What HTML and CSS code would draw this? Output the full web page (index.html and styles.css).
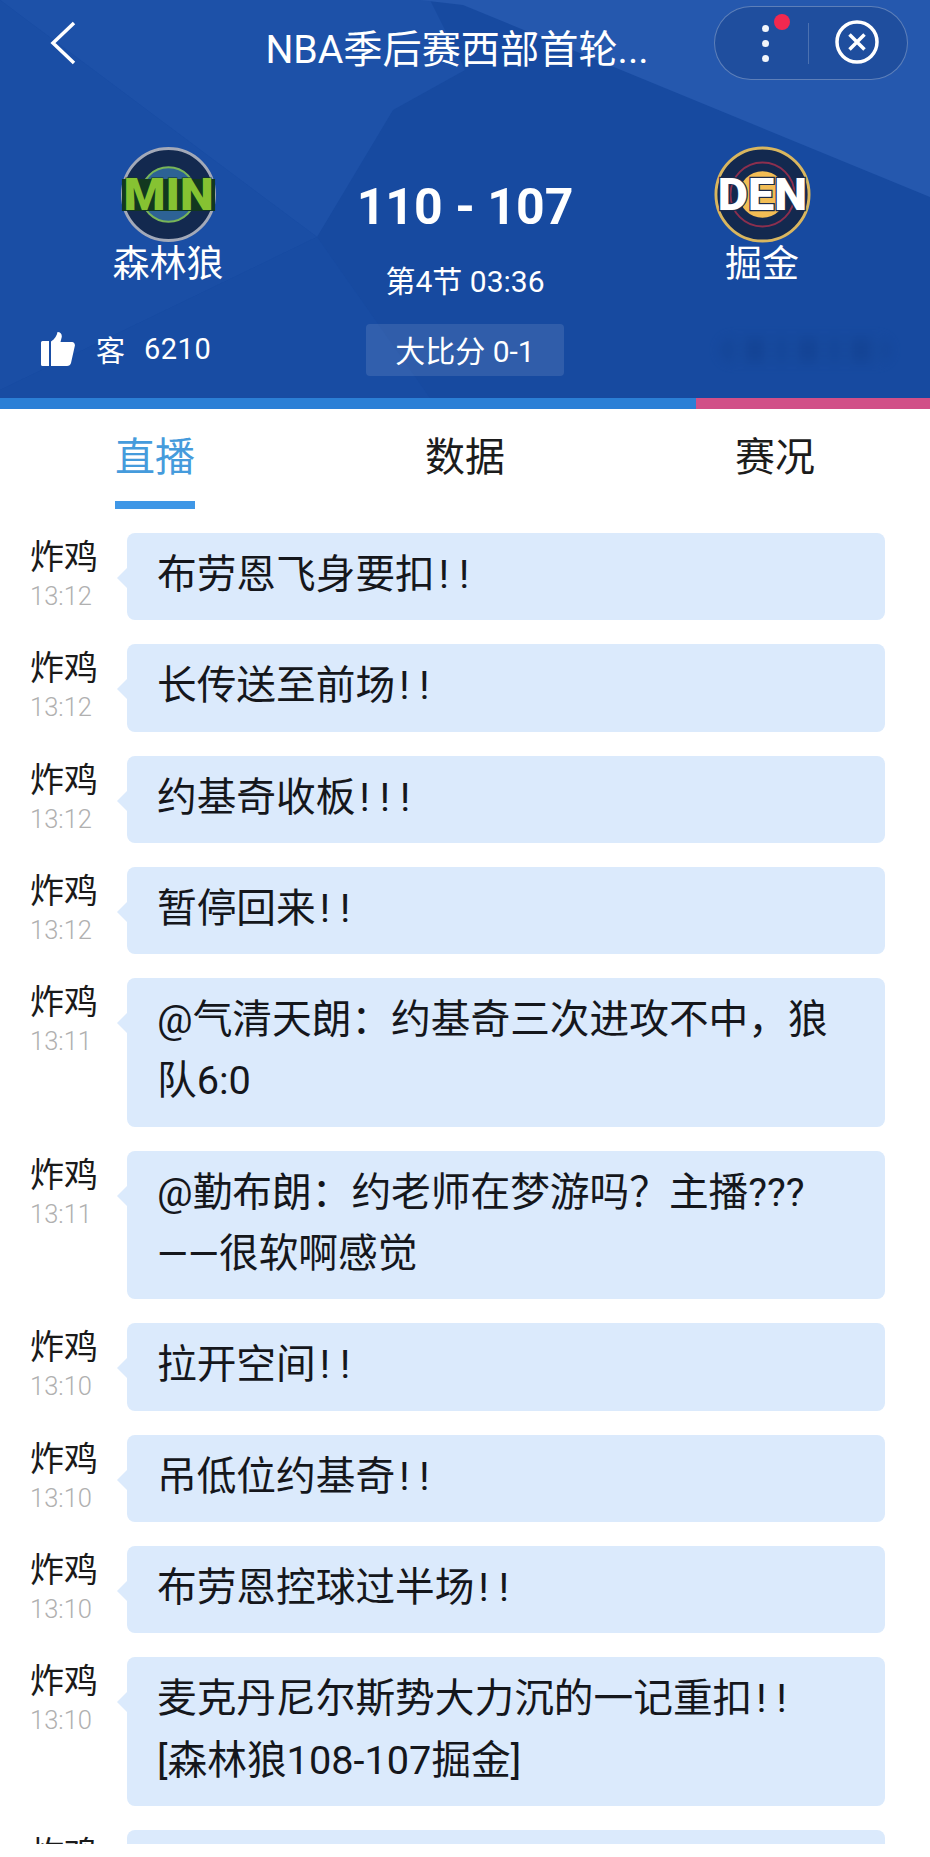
FILE: index.html
```html
<!DOCTYPE html>
<html lang="zh-CN">
<head>
<meta charset="utf-8">
<title>NBA季后赛西部首轮</title>
<link rel="stylesheet" href="styles.css">
</head>
<body>
<div class="page">
  <header class="hero">
    <svg class="hero-bg" viewBox="0 0 930 398" preserveAspectRatio="none" aria-hidden="true">
      <rect width="930" height="398" fill="#174aa0"/>
      <polygon points="0,0 430,0 465,70 393,110 317,237" fill="#1d51a8"/>
      <polygon points="0,0 317,237 0,390" fill="#1a4ea5"/>
      <polygon points="420,0 463,5 930,197 930,0" fill="#2558ae"/>
      <polygon points="0,390 317,237 430,398 0,398" fill="#184ca3"/>
    </svg>

    <div class="topbar">
      <svg class="back" viewBox="0 0 26 44" aria-hidden="true"><path d="M24 2 L3 22 L24 42"/></svg>
      <h1 class="title">NBA季后赛西部首轮...</h1>
      <div class="capsule">
        <div class="capsule-more">
          <span class="dot"></span><span class="dot"></span><span class="dot"></span>
          <span class="badge"></span>
        </div>
        <span class="capsule-sep"></span>
        <svg class="close" viewBox="0 0 44 44" aria-hidden="true">
          <circle cx="22" cy="22" r="20"/>
          <path d="M14.500 14.500 L29.500 29.500 M29.500 14.500 L14.500 29.500"/>
        </svg>
      </div>
    </div>

    <div class="match">
      <div class="team">
        <svg class="logo" viewBox="0 0 100 100" role="img" aria-label="MIN">
          <circle cx="50" cy="50" r="47.500" fill="#13294f" stroke="#a3a9b8" stroke-width="3"/>
          <circle cx="50" cy="50" r="28" fill="#2d6295" stroke="#78b558" stroke-width="2"/>
          <rect x="2" y="34" width="96" height="33" fill="#12381f"/>
          <text class="logo-text logo-min" x="50" y="66" textLength="93" lengthAdjust="spacingAndGlyphs">MIN</text>
        </svg>
        <div class="team-name">森林狼</div>
      </div>
      <div class="score-box">
        <div class="score">110 - 107</div>
        <div class="period">第4节 03:36</div>
      </div>
      <div class="team">
        <svg class="logo" viewBox="0 0 100 100" role="img" aria-label="DEN">
          <circle cx="50" cy="50" r="48" fill="#13294f" stroke="#d9b65f" stroke-width="3"/>
          <circle cx="50" cy="50" r="33" fill="none" stroke="#8c2f4e" stroke-width="2"/>
          <circle cx="50" cy="50" r="24" fill="#f2bd55"/>
          <text class="logo-text logo-den" x="50" y="66" textLength="92" lengthAdjust="spacingAndGlyphs">DEN</text>
        </svg>
        <div class="team-name">掘金</div>
      </div>
    </div>

    <div class="hero-foot">
      <div class="likes">
        <svg class="thumb" viewBox="0 0 34 34" aria-hidden="true">
          <path d="M0 10.500 a1.500 1.500 0 0 1 1.500 -1.500 H8 V34 H1.500 A1.500 1.500 0 0 1 0 32.500 Z"/>
          <path d="M10 9.500 C14 7 16 3 16.500 0 C20 0 21.500 3 20.500 6 L19.500 10 H31 C33 10 34.300 12 33.800 14 L30 31 C29.500 33 28 34 26 34 H10 Z"/>
        </svg>
        <span class="likes-side">客</span>
        <span class="likes-count">6210</span>
      </div>
      <div class="series">大比分 0-1</div>
      <div class="smudge-slot"><span class="smudge"></span></div>
    </div>
  </header>

  <div class="progress"><span class="progress-away"></span><span class="progress-home"></span></div>

  <nav class="tabs">
    <a class="tab tab-active">直播</a>
    <a class="tab">数据</a>
    <a class="tab">赛况</a>
  </nav>

  <section class="feed">
    <article class="msg">
      <div class="who"><div class="who-name">炸鸡</div><div class="who-time">13:12</div></div>
      <div class="bubble">布劳恩飞身要扣<span class="bang">!!</span></div>
    </article>
    <article class="msg">
      <div class="who"><div class="who-name">炸鸡</div><div class="who-time">13:12</div></div>
      <div class="bubble">长传送至前场<span class="bang">!!</span></div>
    </article>
    <article class="msg">
      <div class="who"><div class="who-name">炸鸡</div><div class="who-time">13:12</div></div>
      <div class="bubble">约基奇收板<span class="bang">!!!</span></div>
    </article>
    <article class="msg">
      <div class="who"><div class="who-name">炸鸡</div><div class="who-time">13:12</div></div>
      <div class="bubble">暂停回来<span class="bang">!!</span></div>
    </article>
    <article class="msg">
      <div class="who"><div class="who-name">炸鸡</div><div class="who-time">13:11</div></div>
      <div class="bubble">@气清天朗：约基奇三次进攻不中，狼队6:0</div>
    </article>
    <article class="msg">
      <div class="who"><div class="who-name">炸鸡</div><div class="who-time">13:11</div></div>
      <div class="bubble">@勤布朗：约老师在梦游吗？主播???<br>——很软啊感觉</div>
    </article>
    <article class="msg">
      <div class="who"><div class="who-name">炸鸡</div><div class="who-time">13:10</div></div>
      <div class="bubble">拉开空间<span class="bang">!!</span></div>
    </article>
    <article class="msg">
      <div class="who"><div class="who-name">炸鸡</div><div class="who-time">13:10</div></div>
      <div class="bubble">吊低位约基奇<span class="bang">!!</span></div>
    </article>
    <article class="msg">
      <div class="who"><div class="who-name">炸鸡</div><div class="who-time">13:10</div></div>
      <div class="bubble">布劳恩控球过半场<span class="bang">!!</span></div>
    </article>
    <article class="msg">
      <div class="who"><div class="who-name">炸鸡</div><div class="who-time">13:10</div></div>
      <div class="bubble">麦克丹尼尔斯势大力沉的一记重扣<span class="bang">!!</span><br>[森林狼108-107掘金]</div>
    </article>
    <article class="msg">
      <div class="who"><div class="who-name">炸鸡</div></div>
      <div class="bubble">&nbsp;</div>
    </article>
  </section>
</div>
</body>
</html>
```

FILE: styles.css
```css
* { box-sizing: border-box; }

html, body {
  margin: 0;
  background: #fff;
}

body {
  font-family: Roboto, "Noto Sans CJK SC", sans-serif;
  color: #111;
}

.page {
  width: 930px;
  height: 1857px;
  overflow: hidden;
  display: flex;
  flex-direction: column;
}

/* Match header */
.hero {
  position: relative;
  height: 398px;
  flex: none;
  color: #fff;
  display: flex;
  flex-direction: column;
}

.hero-bg {
  position: absolute;
  inset: 0;
  width: 100%;
  height: 100%;
}

.topbar, .match, .hero-foot {
  position: relative;
}

.topbar {
  height: 86px;
  flex: none;
  display: grid;
  grid-template-columns: 240px 1fr 240px;
  grid-template-rows: 86px;
  align-items: center;
}

.back {
  width: 26px;
  height: 44px;
  margin-left: 50px;
  fill: none;
  stroke: #fff;
  stroke-width: 3.500;
}

.title {
  margin: 0;
  align-self: start;
  height: 86px;
  padding: 7px 16px 0 0;
  text-align: center;
  font-size: 39.200px;
  font-weight: 400;
  line-height: 86px;
  white-space: nowrap;
}

.capsule {
  justify-self: end;
  margin-right: 22px;
  width: 194px;
  height: 74px;
  border-radius: 37px;
  border: 1px solid rgba(255, 255, 255, 0.28);
  background: rgba(20, 60, 130, 0.35);
  display: flex;
  align-items: center;
}

.capsule-more {
  position: relative;
  width: 93px;
  display: flex;
  flex-direction: column;
  align-items: center;
  gap: 8px;
  padding-left: 8px;
}

.dot {
  width: 7px;
  height: 7px;
  border-radius: 50%;
  background: #f2f5fa;
}

.badge {
  position: absolute;
  left: 59px;
  top: -11px;
  width: 16px;
  height: 16px;
  border-radius: 50%;
  background: #f2284f;
}

.capsule-sep {
  width: 1px;
  height: 41px;
  background: rgba(255, 255, 255, 0.2);
}

.close {
  width: 44px;
  height: 44px;
  margin-left: 26px;
  margin-top: -2px;
  fill: none;
  stroke: #fff;
  stroke-width: 3.500;
}

.match {
  flex: none;
  display: grid;
  grid-template-columns: 336px 258px 336px;
  height: 222px;
  padding-top: 60px;
}

.team {
  display: flex;
  flex-direction: column;
  align-items: center;
}

.logo {
  width: 97px;
  height: 97px;
  display: block;
  overflow: visible;
}

.logo-text {
  font-family: Roboto, sans-serif;
  font-weight: 900;
  font-size: 46px;
  text-anchor: middle;
  paint-order: stroke;
}

.logo-min {
  fill: #86c232;
  stroke: #12381f;
  stroke-width: 1.200;
}

.logo-den {
  fill: #fff;
  stroke: #1c2a4a;
  stroke-width: 2.500;
}

.team-name {
  font-size: 37px;
  line-height: 44px;
  margin-top: 0;
}

.score-box {
  text-align: center;
}

.score {
  font-size: 50px;
  font-weight: 700;
  line-height: 60px;
  margin-top: 31px;
  white-space: nowrap;
}

.period {
  font-size: 30px;
  line-height: 40px;
  margin-top: 25px;
  white-space: nowrap;
}

.hero-foot {
  flex: none;
  display: grid;
  grid-template-columns: 336px 258px 336px;
  align-items: start;
  padding-top: 16px;
}

.likes {
  display: flex;
  align-items: center;
  height: 44px;
  margin-top: 3px;
  padding-left: 41px;
  font-size: 29px;
}

.thumb {
  width: 34px;
  height: 34px;
  fill: #fff;
  margin-right: 21px;
}

.likes-count {
  margin-left: 19px;
  letter-spacing: 0.500px;
}

.series {
  justify-self: center;
  width: 198px;
  height: 52px;
  line-height: 56px;
  text-align: center;
  font-size: 30px;
  border-radius: 4px;
  background: rgba(255, 255, 255, 0.11);
}

.smudge-slot {
  display: flex;
  justify-content: flex-end;
  padding: 14px 40px 0 0;
}

/* Scrubbed-out label at the right of the footer */
.smudge {
  width: 170px;
  height: 24px;
  border-radius: 12px;
  filter: blur(6px);
  opacity: 0.4;
  background: repeating-linear-gradient(90deg, #11408e 0 17px, #2056ab 17px 23px, #0f3b86 23px 47px, #2056ab 47px 53px);
}

/* Two-team ratio bar */
.progress {
  height: 11px;
  flex: none;
  display: flex;
}

.progress-away {
  width: 696px;
  background: #2b7fd6;
}

.progress-home {
  flex: 1;
  background: #d14f87;
}

/* Tabs */
.tabs {
  height: 100px;
  flex: none;
  display: grid;
  grid-template-columns: repeat(3, 1fr);
}

.tab {
  justify-self: center;
  width: 80px;
  height: 100px;
  text-align: center;
  font-size: 40px;
  line-height: 98px;
  color: #1c1c1c;
}

.tab-active {
  color: #459bdc;
  border-bottom: 8px solid #3f97e6;
}

/* Live commentary feed */
.feed {
  height: 1335px;
  flex: none;
  overflow: hidden;
  padding: 24px 45px 0 31px;
}

.msg {
  display: flex;
  margin-bottom: 24px;
}

.who {
  width: 96px;
  flex: none;
  padding-top: 2px;
  margin-left: -1px;
  margin-right: 1px;
}

.who-name {
  font-size: 34px;
  line-height: 44px;
  color: #1a1a1a;
  white-space: nowrap;
}

.who-time {
  font-size: 25.500px;
  line-height: 35px;
  font-weight: 300;
  color: #b0b0b0;
}

.bubble {
  position: relative;
  flex: 1;
  padding: 11px 30px 15px;
  font-size: 39.700px;
  line-height: 61.300px;
  border-radius: 8px;
  background: #dbeafc;
  color: #15171c;
}

.bubble::before {
  content: "";
  position: absolute;
  left: -10px;
  top: 35px;
  border-style: solid;
  border-width: 10px 10px 10px 0;
  border-color: transparent #dbeafc transparent transparent;
}

.bang {
  margin-left: 4px;
  letter-spacing: 10px;
}
```
